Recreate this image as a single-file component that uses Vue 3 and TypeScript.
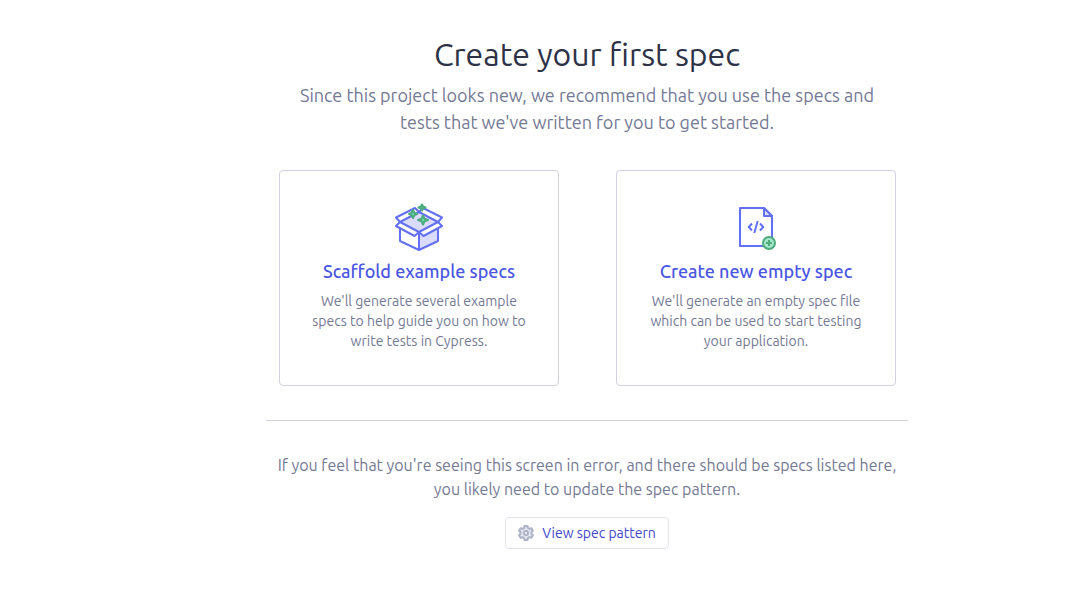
<script setup lang="ts">
interface SpecOption {
  id: 'scaffold' | 'empty'
  title: string
  lines: string[]
}

const options: SpecOption[] = [
  {
    id: 'scaffold',
    title: 'Scaffold example specs',
    lines: ["We'll generate several example", 'specs to help guide you on how to', 'write tests in Cypress.'],
  },
  {
    id: 'empty',
    title: 'Create new empty spec',
    lines: ["We'll generate an empty spec file", 'which can be used to start testing', 'your application.'],
  },
]
</script>

<template>
  <main class="page">
    <div class="content">
      <h1>Create your first spec</h1>
      <p class="intro">
        Since this project looks new, we recommend that you use the specs and<br />
        tests that we've written for you to get started.
      </p>

      <div class="cards">
        <button v-for="option in options" :key="option.id" type="button" class="card">
          <svg v-if="option.id === 'scaffold'" class="art" viewBox="0 0 48 48" fill="none" aria-hidden="true">
            <path d="M5 19 24 9l19 10-19 10z" fill="#dadcff" />
            <path d="M24 29 43 19v19L24 47z" fill="#dadcff" />
            <g stroke="#6470f3" stroke-width="2" stroke-linejoin="round">
              <path d="M5 24v14l19 9 19-9V24M24 28v19" />
              <path d="M5 19 1 14.500 20 5l4 4z" fill="#fff" />
              <path d="M43 19l4-4.500L28 5l-4 4z" fill="#fff" />
              <path d="M5 19l-4 4 18.500 10 4.500-4z" fill="#fff" />
              <path d="M43 19l4 4-18.500 10-4.500-4z" fill="#fff" />
            </g>
            <g fill="#69d3a7" stroke="#4faa7c" stroke-width="2" stroke-linejoin="round">
              <path d="M27 1.500l1 2 2.500 1-2.500 1-1 2-1-2-2.500-1 2.500-1z" />
              <path d="M18 7l1.500 2.800L22 11l-2.500 1.200L18 15l-1.500-2.800L14 11l2.500-1.200z" />
              <path d="M28 12.500l1.500 3.100L33 17l-3.500 1.400L28 21.500l-1.500-3.100L23 17l3.500-1.400z" />
            </g>
          </svg>
          <svg v-else class="art" viewBox="0 0 48 48" fill="none" aria-hidden="true">
            <g stroke="#6470f3" stroke-width="2" stroke-linejoin="round">
              <path d="M8 5h24l8 8v30H8z" fill="#fff" />
              <path d="M32 5v8h8z" fill="#dadcff" />
              <path d="M20 20.500 16.800 24l3.200 3.500M28 20.500l3.200 3.500-3.200 3.500M25.700 18l-3.400 12" />
            </g>
            <circle cx="37" cy="40" r="6" fill="#a3e7cb" stroke="#4faa7c" stroke-width="2" />
            <path d="M37 37v6M34 40h6" stroke="#4faa7c" stroke-width="2" />
          </svg>
          <span class="card-title">{{ option.title }}</span>
          <span class="card-text">
            <span v-for="line in option.lines" :key="line" class="line">{{ line }}</span>
          </span>
        </button>
      </div>

      <hr />

      <p class="hint">
        If you feel that you're seeing this screen in error, and there should be specs listed here,<br />
        you likely need to update the spec pattern.
      </p>
      <button type="button" class="pattern">
        <svg class="gear" viewBox="0 0 16 16" aria-hidden="true">
          <path
            d="M6.500 1h3l.5 2 1.400.800 2-.600 1.500 2.600L13.500 7.200v1.600l1.400 1.400-1.500 2.600-2-.600L10 13l-.500 2h-3L6 13l-1.400-.800-2 .600-1.500-2.600 1.400-1.400V7.200L1.100 5.800l1.500-2.600 2 .600L6 3z"
            fill="#e1e3ed" stroke="#afb3c7" stroke-width="2" stroke-linejoin="round"
          />
          <circle cx="8" cy="8" r="2" fill="#fff" stroke="#afb3c7" stroke-width="2" />
        </svg>
        <span>View spec pattern</span>
      </button>
    </div>
  </main>
</template>

<style>
body {
  margin: 0;
  background: #fff;
}
</style>

<style scoped>
.page {
  box-sizing: border-box;
  display: flex;
  justify-content: center;
  padding: 34px 0 32px 95px;
  font-family: Ubuntu, "Noto Sans", "Open Sans", sans-serif;
  color: #747994;
  text-align: center;
}
.content {
  width: 100%;
  max-width: 642px;
}
h1 {
  margin: 0 0 8px;
  font-size: 32px;
  line-height: 40px;
  font-weight: 400;
  color: #2e3247;
}
p {
  margin: 0;
  white-space: nowrap;
}
.intro {
  font-size: 18px;
  line-height: 27px;
}
.cards {
  display: grid;
  grid-template-columns: 1fr 1fr;
  gap: 57px;
  margin: 34px 12px 34px 13px;
}
.card {
  display: flex;
  flex-direction: column;
  align-items: center;
  padding: 32px 16px 34px;
  border: 1px solid #d0d2e0;
  border-radius: 4px;
  background: #fff;
  font-family: inherit;
  color: inherit;
  cursor: pointer;
}
.art {
  width: 48px;
  height: 48px;
  margin-bottom: 8px;
}
.card-title {
  margin-bottom: 8px;
  font-size: 18px;
  line-height: 24px;
  font-weight: 500;
  color: #4956e3;
}
.card-text {
  font-size: 14px;
  line-height: 20px;
}
.line {
  display: block;
  white-space: nowrap;
}
hr {
  margin: 0 0 32px;
  border: 0;
  border-top: 1px solid #d0d2e0;
}
.hint {
  font-size: 16px;
  line-height: 24px;
}
.pattern {
  display: inline-flex;
  align-items: center;
  gap: 8px;
  height: 32px;
  margin-top: 16px;
  padding: 0 12px;
  border: 1px solid #e1e3ed;
  border-radius: 4px;
  background: #fff;
  font-family: inherit;
  font-size: 14px;
  line-height: 20px;
  color: #4048c9;
  cursor: pointer;
}
.gear {
  width: 16px;
  height: 16px;
}
</style>
